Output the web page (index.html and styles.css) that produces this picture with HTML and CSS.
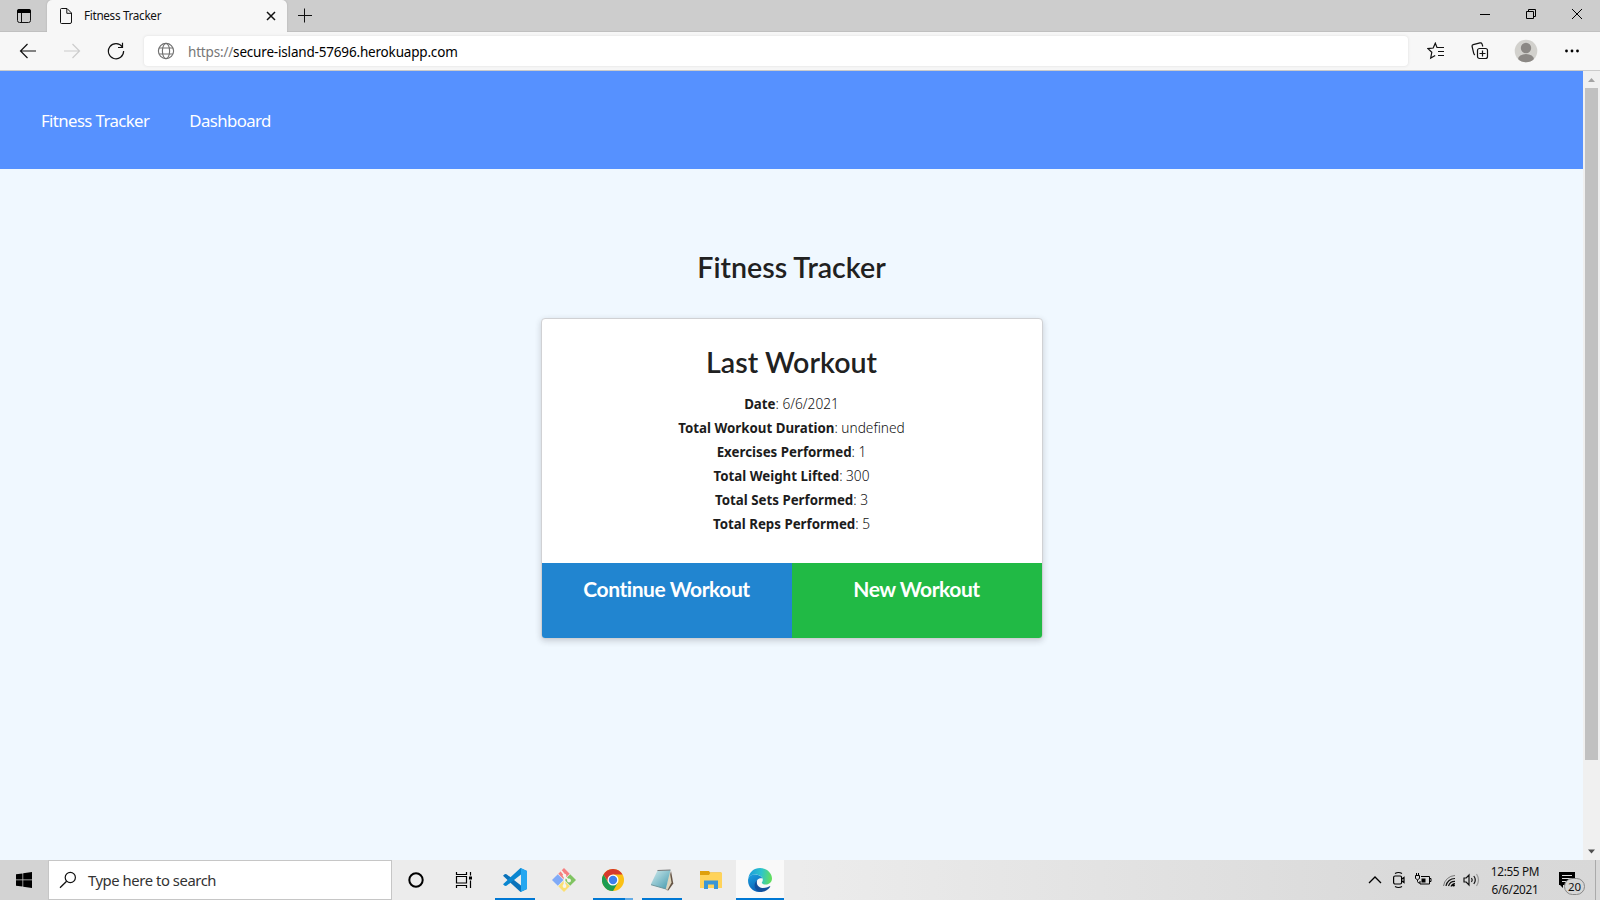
FILE: index.html
```html
<!DOCTYPE html>
<html lang="en">
<head>
<meta charset="utf-8">
<title>Fitness Tracker</title>
<link rel="stylesheet" href="styles.css">
</head>
<body>
<header class="tabs">
  <div class="tab-actions"><svg width="16" height="16" viewBox="0 0 16 16"><rect x="1.5" y="1.5" width="13" height="13" rx="2" fill="none" stroke="#111"/><path d="M1 5V3q0-2 2-2h10q2 0 2 2v2z" fill="#000"/><path d="M5.500 5v9.500" stroke="#111"/></svg></div>
  <div class="tab">
    <svg class="page-icon" width="14" height="18" viewBox="0 0 14 18"><path d="M2.500 1.500H8l4.500 4.500v9q0 1.500-1.500 1.500H2.500Q1.500 16.500 1.500 15.500V2.500q0-1 1-1zM7.800 1.800v4.500h4.600" fill="none" stroke="#111"/></svg>
    <span class="tab-title">Fitness Tracker</span>
    <svg class="tab-close" width="10" height="10" viewBox="0 0 10 10"><path d="M1 1l8 8M9 1L1 9" stroke="#111" stroke-width="1.500"/></svg>
  </div>
  <svg class="plus" width="16" height="16" viewBox="0 0 16 16"><path d="M1 7.500h14M7.500 .5v14" stroke="#111" fill="none"/></svg>
  <div class="window-controls">
    <svg width="12" height="12" viewBox="0 0 12 12"><path d="M1 6.500h10" stroke="#000"/></svg>
    <svg width="12" height="12" viewBox="0 0 12 12"><path d="M1.500 3.500h7v7h-7zM3.500 3V1.500h7v7H9" fill="none" stroke="#000"/></svg>
    <svg width="12" height="12" viewBox="0 0 12 12"><path d="M1 1l10 10M11 1L1 11" stroke="#000"/></svg>
  </div>
</header>
<div class="toolbar">
  <div class="nav-buttons">
    <svg width="18" height="16" viewBox="0 0 18 16"><path d="M17 8H1.500M8.500 1L1.500 8l7 7" fill="none" stroke="#111" stroke-width="1.200"/></svg>
    <svg width="18" height="16" viewBox="0 0 18 16"><path d="M1 8h15.500M9.500 1l7 7-7 7" fill="none" stroke="#ccc" stroke-width="1.200"/></svg>
    <svg width="18" height="18" viewBox="0 0 18 18"><path d="M15.300 5A7.600 7.600 0 1 0 16.600 9M15.500 .8v4.700H11" fill="none" stroke="#111" stroke-width="1.200"/></svg>
  </div>
  <div class="address">
    <svg width="18" height="18" viewBox="0 0 18 18" fill="none" stroke="#707070" stroke-width="1.150"><circle cx="9" cy="9" r="7.600"/><ellipse cx="9" cy="9" rx="3.600" ry="7.600"/><path d="M2 6h14M2 12h14"/></svg>
    <span class="url"><span class="scheme">https://</span>secure-island-57696.herokuapp.com</span>
  </div>
  <div class="toolbar-actions">
    <svg width="18" height="18" viewBox="0 0 18 18" fill="none" stroke="#111" stroke-width="1.200"><path d="M11 5.500H10L8.300 1.200 6.200 6 1 6.600l3.800 3.700L3.700 16l4.500-2.600M11 5.500h6M11 9.500h6M11 13.500h6"/></svg>
    <svg width="18" height="18" viewBox="0 0 18 18" fill="none" stroke="#111" stroke-width="1.200"><path d="M3.800 13Q2.800 12 2.600 10.800L1.100 4.500Q.8 3 2.200 2.600L9 .9q1.500-.3 2 1L11.800 4.500"/><rect x="6.500" y="6.500" width="10" height="10" rx="2"/><path d="M11.500 8.500v6M8.500 11.500h6"/></svg>
    <svg width="24" height="24" viewBox="0 0 24 24"><defs><clipPath id="avatar"><circle cx="12" cy="12" r="11.300"/></clipPath></defs><g clip-path="url(#avatar)"><rect width="24" height="24" fill="#d2d1cd"/><circle cx="12" cy="9" r="5.200" fill="#8b8885"/><ellipse cx="12" cy="20.500" rx="8" ry="5.500" fill="#8b8885"/></g></svg>
    <svg width="16" height="4" viewBox="0 0 16 4"><circle cx="2.500" cy="2" r="1.400"/><circle cx="8" cy="2" r="1.400"/><circle cx="13.500" cy="2" r="1.400"/></svg>
  </div>
</div>
<div class="viewport">
  <main class="page">
    <nav class="site-nav"><a class="brand">Fitness Tracker</a><a class="dash">Dashboard</a></nav>
    <h1 class="page-title">Fitness Tracker</h1>
    <section class="card">
      <h2 class="card-title">Last Workout</h2>
      <div class="stats">
        <p><b>Date</b>: 6/6/2021</p>
        <p><b>Total Workout Duration</b>: undefined</p>
        <p><b>Exercises Performed</b>: 1</p>
        <p><b>Total Weight Lifted</b>: 300</p>
        <p><b>Total Sets Performed</b>: 3</p>
        <p><b>Total Reps Performed</b>: 5</p>
      </div>
      <div class="card-buttons"><a class="btn btn-continue">Continue Workout</a><a class="btn btn-new">New Workout</a></div>
    </section>
  </main>
  <div class="scrollbar">
    <svg width="17" height="17" viewBox="0 0 17 17"><path d="M5 11l3.500-4 3.500 4z" fill="#a3a3a3"/></svg>
    <div class="thumb"></div>
    <svg class="down" width="17" height="17" viewBox="0 0 17 17"><path d="M5 6.500l3.500 4 3.500-4z" fill="#505050"/></svg>
  </div>
</div>
<footer class="taskbar">
  <div class="start"><svg width="16" height="16" viewBox="0 0 16 16"><path d="M0 2.300l6.500-.9v6.200H0zM7.200 1.300L16 0v7.600H7.200zM0 8.300h6.500v6.200L0 13.700zM7.200 8.300H16V16l-8.800-1.300z"/></svg></div>
  <div class="search"><svg width="18" height="18" viewBox="0 0 18 18"><circle cx="11.300" cy="6.500" r="5.100" fill="none" stroke="#111" stroke-width="1.200"/><path d="M7.600 10.200L1 16.700" stroke="#111" stroke-width="1.300"/></svg><span>Type here to search</span></div>
  <div class="slot sys"><svg width="18" height="18" viewBox="0 0 18 18"><circle cx="9" cy="9" r="6.700" fill="none" stroke="#000" stroke-width="2"/></svg></div>
  <div class="slot sys"><svg width="18" height="18" viewBox="0 0 18 18" fill="none" stroke="#000" stroke-width="1.200"><path d="M1.500 1v2.500h10V1M1.500 17v-2.500h10V17M1.500 5.500h10v6.500h-10zM15.500 1v3.500M15.500 9.500V17"/><path d="M14 7h3" stroke-width="3"/></svg></div>
  <div class="apps">
    <div class="slot running"><svg width="24" height="24" viewBox="0 0 24 24"><path d="M17.500 24L24 21V12l-6 5.500L3.500 6.200 2 6 0 7.800z" fill="#0a72ba"/><path d="M17.500 0L24 3v9l-6-5.500L3.500 17.800 2 18 0 16.200z" fill="#0a86d0"/><path d="M17.500 0L24 3v18l-6.500 3 .5-1.500v-21z" fill="#25a7f0"/></svg></div>
    <div class="slot"><svg width="24" height="24" viewBox="0 0 24 24"><path d="M12 0l5.700 5.700L12 11.500 6.300 5.700z" fill="#f58080"/><path d="M5.800 6.200l5.700 5.800-5.700 5.800L0 12z" fill="#80aaf7"/><path d="M18.200 6.200L24 12l-5.800 5.800-5.700-5.800z" fill="#80c462"/><path d="M12 12.500l5.700 5.700L12 24l-5.700-5.800z" fill="#fbdf72"/><path d="M9 2.500l3.500 4.500v11M12.500 8l4.500 4.500" stroke="#f4f4ee" stroke-width="1.600" fill="none"/><circle cx="12.500" cy="7.500" r="1.800" fill="#f5f5ee"/><circle cx="17" cy="12.500" r="1.900" fill="#f5f5ee"/><circle cx="12.500" cy="18" r="1.900" fill="#f5f5ee"/></svg></div>
    <div class="slot running multi"><svg width="22" height="22" viewBox="0 0 22 22"><circle cx="11" cy="11" r="11" fill="#fbc116"/><path d="M1.470 5.500A11 11 0 0 1 20.530 5.500H11L6.500 13.500z" fill="#d6392d"/><path d="M1.470 5.500A11 11 0 0 0 11 22L15.800 13.700Q11 17 6.300 13.700z" fill="#1d9c52"/><circle cx="11" cy="11" r="5.500" fill="#fff"/><circle cx="11" cy="11" r="4.200" fill="#3f7fec"/></svg></div>
    <div class="slot running"><svg width="24" height="24" viewBox="0 0 24 24"><defs><linearGradient id="pad" x1="0" y1="0" x2="1" y2="1"><stop offset="0" stop-color="#d2ecee"/><stop offset="1" stop-color="#4298ad"/></linearGradient></defs><path d="M21 3l2.300 12.500-5 7-2-.5z" fill="#655446"/><path d="M19.500 2.500l2 12-4 7.500-1.500-1z" fill="#ddd5bd"/><path d="M7.500 2.500L20.500 2l-4.700 19L.8 16.500z" fill="url(#pad)"/><path d="M7.500 2.500L20.500 2" stroke="#777" stroke-width="1.200"/><path d="M1 16.700l15 4.300" stroke="#6d979d"/></svg></div>
    <div class="slot"><svg width="22" height="20" viewBox="0 0 22 20"><path d="M0 1h9l1 1.500h11V8H0z" fill="#dfa00c"/><path d="M0 5h9l1.500-2.500H22V18H0z" fill="#ffd35a"/><path d="M4 19v-8.500h14V19h-4v-4.500H8V19z" fill="#3b96d5"/></svg></div>
    <div class="slot running active"><svg width="24" height="24" viewBox="0 0 24 24"><defs><linearGradient id="edgeTop" x1="0" y1=".3" x2="1" y2=".4"><stop offset="0" stop-color="#199bdb"/><stop offset=".55" stop-color="#2ec4cc"/><stop offset="1" stop-color="#64df5c"/></linearGradient><linearGradient id="edgeLeft" x1="0" y1="0" x2=".4" y2="1"><stop offset="0" stop-color="#1ba1df"/><stop offset="1" stop-color="#0b63b8"/></linearGradient></defs><path d="M.2 10.500C1.500 4 6 0 12 0c7 0 12 5 12 10.500 0 3.500-2.800 6-6 6-2.500 0-4.200-1-4.200-1.800 0-.6 1-1 1-2.900C14.800 8 10 6.500 7 6.500 3.500 6.500 1 8.500.2 10.500z" fill="url(#edgeTop)"/><path d="M.1 11.500C.6 8.200 4 6.200 7.500 6.500c3.700.3 6.500 2.300 7 4-2.500-1-6.300.7-6.300 4.800 0 4.500 4 7.700 6.500 8.400C6.500 25.500-.7 19.500.1 11.500z" fill="url(#edgeLeft)"/><path d="M9.200 12.200C7 19 15 22 21.500 18.300c.6-.3 1 .1.600.7-3 4-7.600 5.600-11 4.600C6 22 5 15.500 9.200 12.200z" fill="#12509d"/></svg></div>
  </div>
  <div class="tray">
    <svg width="14" height="16" viewBox="0 0 14 16"><path d="M1 11l6-6 6 6" fill="none" stroke="#000" stroke-width="1.300"/></svg>
    <svg width="14" height="18" viewBox="0 0 14 18" fill="none" stroke="#000" stroke-width="1.200"><rect x="1.600" y="5" width="8" height="8" rx="1.500"/><path d="M10 8l2-1.500v5L10 10M3 2.500q3.500-2 7 0M3 15.500q3.500 2 7 0"/></svg>
    <svg width="18" height="16" viewBox="0 0 18 16" fill="none" stroke="#000"><path d="M7 4.500h8.500v7.500h-9.500V9M16 6.500h1v3h-1M3.500 8v1.500q0 1.500 2.500 1.500M2.500 1v3M4.500 1v3"/><path d="M1.500 3.500h4v3q-2 2.500-4 0z"/><path d="M7.500 6.500h4v4h-4z" fill="#000" stroke="none"/></svg>
    <svg class="wifi" width="14" height="14" viewBox="0 0 14 14" fill="none" stroke="#111"><path d="M1.500 13A12 12 0 0 1 13 2.500" stroke="#777"/><path d="M4 13A9 9 0 0 1 13 5.500M6.500 13A6.500 6.500 0 0 1 13 8.300M9 13.500A4.500 4.500 0 0 1 13 10.500" stroke-width="1.200"/><circle cx="11.500" cy="12.300" r="1.300" fill="#000" stroke="none"/></svg>
    <svg width="17" height="14" viewBox="0 0 17 14" fill="none" stroke="#111" stroke-width="1.200"><path d="M1 5h2.200L6 2v10L3.200 9H1zM8.500 5q1.500 2 0 4M10.800 3q3 4 0 8"/><path d="M13.500 1q4 6 0 12" stroke="#999"/></svg>
    <div class="clock"><span class="time">12:55 PM</span><span class="date">6/6/2021</span></div>
    <div class="notify"><svg width="18" height="16" viewBox="0 0 18 16"><path d="M1 0h16v13H5v3l-3-3H1z"/><path d="M4 3.500h10M4 6.500h10M4 9.500h6" stroke="#ddd"/></svg><span class="badge">20</span></div>
    <div class="show-desktop"></div>
  </div>
</footer>
</body>
</html>
```

FILE: styles.css
```css
* { box-sizing: border-box; }
body { margin: 0; width: 1600px; height: 900px; overflow: hidden; display: flex; flex-direction: column; font-family: "Noto Sans", "Open Sans", sans-serif; color: #111; }
svg { display: block; flex: none; }
span, a, p, b { white-space: nowrap; }

.tabs { height: 32px; background: #cdcdcd; display: flex; align-items: center; box-shadow: inset 0 -1px #c0c0c0; }
.tab-actions { width: 47px; padding-left: 16px; }
.tab { width: 240px; height: 32px; background: #f7f7f7; border-radius: 5px 5px 0 0; display: flex; align-items: center; padding-left: 12px; box-shadow: 0 0 2px #aaa; clip-path: inset(0 -2px 0 -2px); }
.tab-title { font-size: 11.7px; letter-spacing: -.3px; margin-left: 11px; padding-bottom: 2px; width: 182px; }
.plus { margin-left: 10px; }
.window-controls { margin-left: auto; display: flex; gap: 34px; padding-right: 17px; padding-bottom: 4px; }

.toolbar { height: 39px; background: #f7f7f7; border-bottom: 1px solid #cbcbcb; display: flex; align-items: center; }
.nav-buttons { width: 144px; display: flex; align-items: center; gap: 26px; padding-left: 19px; }
.address { width: 1264px; height: 30px; background: #fff; border-radius: 4px; box-shadow: 0 0 3px #ddd; display: flex; align-items: center; padding-left: 13px; }
.url { font-size: 13.5px; letter-spacing: -.18px; margin-left: 13px; padding-top: 1px; color: #000; }
.scheme { color: #777; }
.toolbar-actions { display: flex; align-items: center; padding-left: 19px; }
.toolbar-actions svg:nth-child(2) { margin-left: 26px; }
.toolbar-actions svg:nth-child(3) { margin-left: 25px; }
.toolbar-actions svg:nth-child(4) { margin-left: 26px; }

.viewport { height: 789px; display: flex; background: #f0f8ff; }
.page { width: 1583px; display: flex; flex-direction: column; align-items: center; }
.site-nav { width: 100%; height: 98px; background: #5691ff; color: #fff; display: flex; align-items: center; padding: 1px 0 0 41px; font-size: 16.8px; letter-spacing: -.6px; }
.dash { margin-left: 40px; }
.page-title, .card-title { margin: 0; font-family: Lato, sans-serif; font-size: 28.6px; font-weight: 600; line-height: 36px; color: #212121; }
.page-title { margin-top: 80px; }
.card { width: 502px; height: 321px; margin-top: 33px; border: 1px solid #d0d1d4; border-radius: 4px; background: #fff; overflow: hidden; box-shadow: 0 2px 6px rgba(34,36,38,.2); display: flex; flex-direction: column; align-items: center; }
.card-title { margin-top: 25px; }
.stats { margin-top: 12px; font-size: 13.7px; line-height: 24px; text-align: center; color: #111; font-weight: 300; }
.stats p { margin: 0; }
.stats b { font-size: 13.3px; font-weight: 700; color: #1c1c1c; }
.card-buttons { margin-top: auto; width: 100%; height: 75px; display: flex; }
.btn { flex: 1; color: #fff; font: 700 21px/28px Lato, sans-serif; letter-spacing: -.45px; font-variant-ligatures: none; text-align: center; padding-top: 12px; }
.btn-continue { background: #2185d0; }
.btn-new { background: #21ba45; }

.scrollbar { width: 17px; background: #f0f0f0; display: flex; flex-direction: column; }
.thumb { height: 672px; margin: 0 2px; background: #c1c1c1; }
.down { margin-top: auto; }

.taskbar { height: 40px; background: linear-gradient(90deg, #ececec 0, #ececec 800px, #dadada 1400px, #d8d8d8 1600px); display: flex; }
.start { width: 48px; background: #d3d3d3; display: grid; place-items: center; }
.search { width: 344px; border: 1px solid #c6c6c6; background: #fff; display: flex; align-items: center; padding-left: 10px; font-size: 14.8px; letter-spacing: -.43px; color: #333; }
.search span { margin-left: 11px; }
.slot { width: 49px; height: 40px; display: grid; place-items: center; background: linear-gradient(#0078d4, #0078d4) center bottom / 0 2px no-repeat; }
.sys { width: 48px; }
.apps { display: flex; padding-left: 2px; }
.slot.running { background-size: 40px 2px; }
.slot.multi { background: linear-gradient(90deg, #0078d4 32px, #63abe5 32px) center bottom / 40px 2px no-repeat; }
.slot.active { width: 48px; margin-left: 1px; background-color: #f9f9f9; background-size: 100% 2px; }
.tray { margin-left: auto; display: flex; align-items: center; }
.tray svg:nth-child(2) { margin-left: 10px; }
.tray svg:nth-child(3) { margin-left: 8px; }
.tray svg:nth-child(4) { margin-left: 10px; }
.tray svg:nth-child(5) { margin-left: 7px; }
.clock { width: 64px; margin-left: 3px; display: flex; flex-direction: column; align-items: center; font-size: 11.8px; line-height: 18px; }
.time { letter-spacing: -.35px; }
.date { letter-spacing: -.3px; }
.notify { position: relative; width: 48px; height: 40px; padding: 12px 0 0 11px; }
.badge { position: absolute; left: 17px; top: 18px; width: 21px; height: 17px; border: 1px solid #888; border-radius: 9px; background: #d6d6d6; font-size: 11.5px; line-height: 15px; text-align: center; }
.show-desktop { width: 5px; height: 40px; border-left: 1px solid #aaa; }
```
